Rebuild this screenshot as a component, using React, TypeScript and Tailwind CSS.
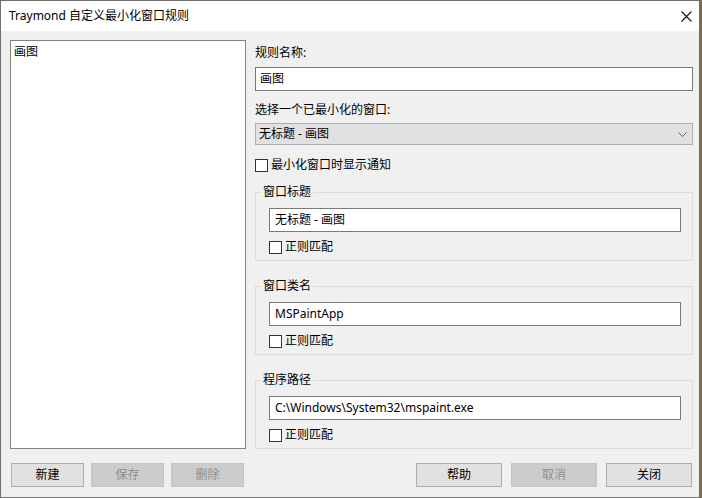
import React from "react";

const font = "font-['Noto_Sans','Noto_Sans_CJK_SC',sans-serif]";

function Check({ label }: { label: string }) {
  return (
    <div className="flex h-[16px] items-center gap-[3px] leading-[16px]">
      <span className="block h-[13px] w-[13px] shrink-0 border border-[#333333] bg-white" />
      <span>{label}</span>
    </div>
  );
}

function Field({ value, pl = "pl-[4px]" }: { value: string; pl?: string }) {
  return (
    <div className={`flex h-[24px] items-center border border-[#7a7a7a] bg-white ${pl} leading-[16px]`}>
      {value}
    </div>
  );
}

function Group({ title, value, className = "" }: { title: string; value: string; className?: string }) {
  return (
    <fieldset className={`border border-[#dcdcdc] pl-[13px] pr-[11px] pb-[5px] ${className}`}>
      <legend className="-ml-[8px] px-[2px] leading-[16px]">{title}</legend>
      <div className="mt-[8px]">
        <Field value={value} pl="pl-[5px]" />
      </div>
      <div className="mt-[7px]">
        <Check label="正则匹配" />
      </div>
    </fieldset>
  );
}

function Btn({ label, w, disabled }: { label: string; w: string; disabled?: boolean }) {
  return (
    <div
      className={`flex h-[24px] ${w} items-center justify-center border leading-[16px] ${
        disabled ? "border-[#c4c4c4] bg-[#cccccc] text-[#8f8f8f]" : "border-[#adadad] bg-[#e1e1e1] text-black"
      }`}
    >
      {label}
    </div>
  );
}

export default function App() {
  return (
    <div className={`h-[498px] w-[702px] bg-[#7d6a4f] ${font} text-[12px] text-black`}>
      <div className="flex h-[498px] w-[700px] flex-col border border-[#6f6f6f] bg-[#f0f0f0]">
        {/* title bar */}
        <div className="flex h-[30px] shrink-0 items-center justify-between bg-white pl-[8px] pr-[7px]">
          <span className="leading-[16px]">Traymond 自定义最小化窗口规则</span>
          <svg width="11" height="11" viewBox="0 0 11 11" className="block">
            <path d="M0.5 0.5 L10.5 10.5 M10.5 0.5 L0.5 10.5" stroke="#111" strokeWidth="1.1" />
          </svg>
        </div>

        {/* body */}
        <div className="flex flex-1 flex-col pl-[9px] pt-[9px]">
          <div className="flex gap-[9px]">
            {/* list */}
            <div className="h-[409px] w-[236px] border border-[#828282] bg-white pl-[3px] pt-[3px] leading-[16px]">
              画图
            </div>

            {/* right column */}
            <div className="flex w-[438px] flex-col">
              <div className="mt-[5px] leading-[16px]">规则名称:</div>
              <div className="mt-[6px]">
                <Field value="画图" />
              </div>
              <div className="mt-[11px] leading-[16px]">选择一个已最小化的窗口:</div>
              <div className="mt-[5px] flex h-[22px] items-center justify-between border border-[#adadad] bg-[#e1e1e1] pl-[3px] pr-[5px] leading-[16px]">
                <span>无标题 - 画图</span>
                <svg width="9" height="5" viewBox="0 0 9 5" className="block">
                  <path d="M0.5 0.5 L4.5 4.5 L8.5 0.5" fill="none" stroke="#606060" strokeWidth="1" />
                </svg>
              </div>
              <div className="mt-[12px]">
                <Check label="最小化窗口时显示通知" />
              </div>
              <Group title="窗口标题" value="无标题 - 画图" className="mt-[11px]" />
              <Group title="窗口类名" value="MSPaintApp" className="mt-[17px]" />
              <Group title="程序路径" value="C:\Windows\System32\mspaint.exe" className="mt-[17px]" />
            </div>
          </div>

          {/* buttons */}
          <div className="mt-[14px] flex w-[682px] items-center">
            <div className="ml-[1px] flex gap-[7px]">
              <Btn label="新建" w="w-[73px]" />
              <Btn label="保存" w="w-[73px]" disabled />
              <Btn label="删除" w="w-[73px]" disabled />
            </div>
            <div className="ml-auto flex gap-[9px]">
              <Btn label="帮助" w="w-[86px]" />
              <Btn label="取消" w="w-[86px]" disabled />
              <Btn label="关闭" w="w-[86px]" />
            </div>
          </div>
        </div>
      </div>
    </div>
  );
}
